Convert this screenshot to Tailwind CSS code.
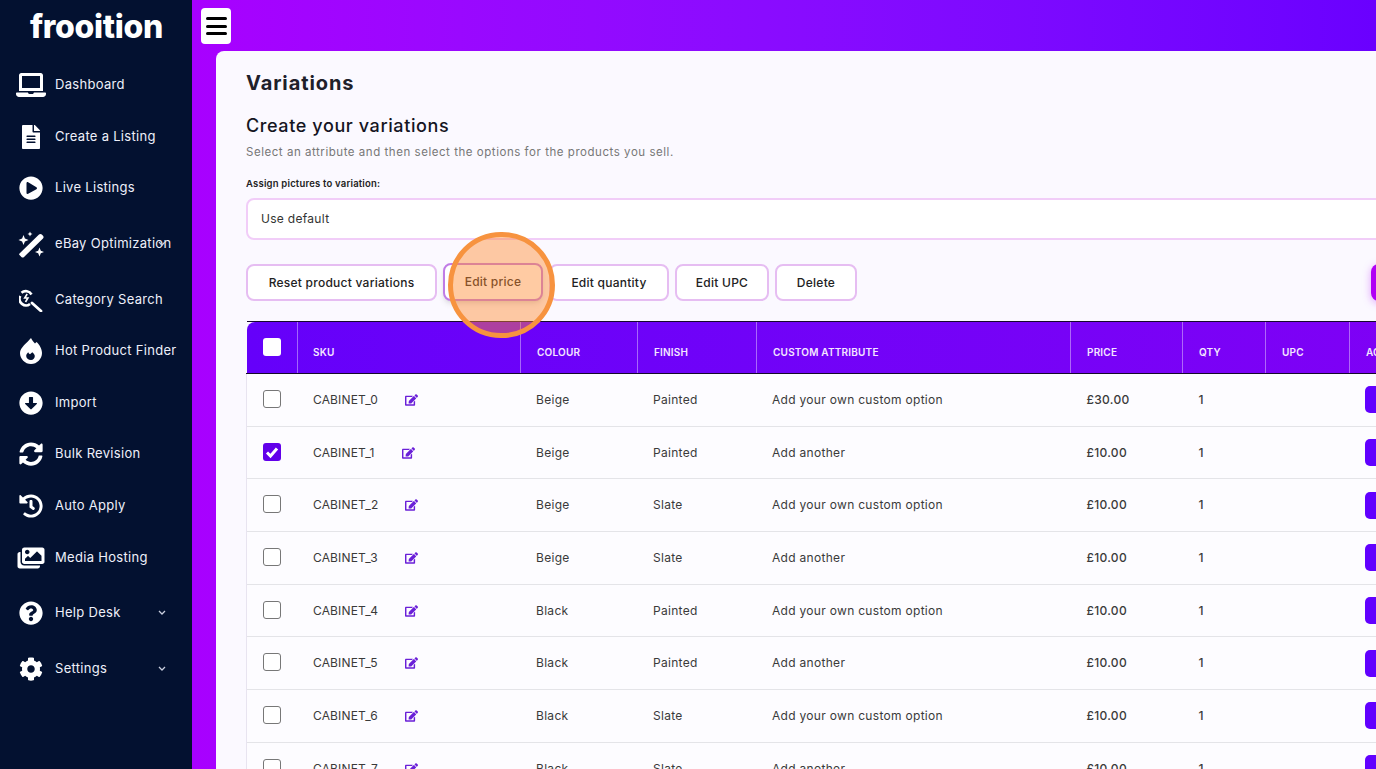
<!DOCTYPE html>
<html lang="en">
<head>
  <meta charset="UTF-8">
  <meta name="viewport" content="width=device-width, initial-scale=1.0">
  <title>Variations</title>
  <script src="https://cdn.jsdelivr.net/npm/@tailwindcss/browser@4"></script>
</head>
<body class="relative flex h-screen overflow-hidden bg-[#fbf9ff] font-['Inter',sans-serif] text-[#222]">

  <!-- Sidebar -->
  <aside class="w-[192px] shrink-0 bg-[#031130] text-[#eef0fa] text-[13px] tracking-[0.3px]">
    <div class="h-[60px] pl-[30px] pt-[7px] text-[32px] leading-[40px] font-extrabold tracking-[-0.3px] text-white">frooition</div>

    <a class="relative flex items-center h-[50px]">
      <span class="flex justify-center w-[30px] ml-[16px] mr-[9px]"><svg class="w-[30px] h-[24px] fill-white" viewBox="0 0 640 512"><path d="M624 416H381.54c-.74 19.81-14.71 32-32.74 32H288c-18.69 0-33.02-17.47-32.77-32H16c-8.8 0-16 7.2-16 16v16c0 35.2 28.8 64 64 64h512c35.2 0 64-28.8 64-64v-16c0-8.8-7.2-16-16-16zM576 48c0-26.4-21.6-48-48-48H112C85.6 0 64 21.6 64 48v336h512V48zm-64 272H128V64h384v256z"/></svg></span>
      Dashboard
    </a>
    <a class="relative flex items-center h-[50px] mt-[2px]">
      <span class="flex justify-center w-[30px] ml-[16px] mr-[9px]"><svg class="w-[18px] h-[24px] fill-white" viewBox="0 0 384 512"><path d="M224 136V0H24C10.7 0 0 10.7 0 24v464c0 13.3 10.7 24 24 24h336c13.3 0 24-10.7 24-24V160H248c-13.2 0-24-10.8-24-24zm64 236c0 6.6-5.4 12-12 12H108c-6.6 0-12-5.4-12-12v-8c0-6.6 5.4-12 12-12h168c6.6 0 12 5.4 12 12v8zm0-64c0 6.6-5.4 12-12 12H108c-6.6 0-12-5.4-12-12v-8c0-6.6 5.4-12 12-12h168c6.6 0 12 5.4 12 12v8zm0-72v8c0 6.6-5.4 12-12 12H108c-6.6 0-12-5.4-12-12v-8c0-6.6 5.4-12 12-12h168c6.6 0 12 5.4 12 12zm96-114.1v6.1H256V0h6.1c6.4 0 12.5 2.5 17 7l97.9 98c4.5 4.5 7 10.6 7 16.9z"/></svg></span>
      Create a Listing
    </a>
    <a class="relative flex items-center h-[50px] mt-[1px]">
      <span class="flex justify-center w-[30px] ml-[16px] mr-[9px]"><svg class="w-[24px] h-[24px] fill-white" viewBox="0 0 512 512"><path d="M256 8C119 8 8 119 8 256s111 248 248 248 248-111 248-248S393 8 256 8zm115.7 272l-176 101c-15.8 8.8-35.7-2.5-35.7-21V152c0-18.4 19.8-29.8 35.7-21l176 107c16.4 9.2 16.4 32.9 0 42z"/></svg></span>
      Live Listings
    </a>
    <a class="relative flex items-center h-[50px] mt-[6px]">
      <span class="flex justify-center w-[30px] ml-[16px] mr-[9px]"><svg class="w-[27px] h-[27px] fill-white" viewBox="0 0 27 27"><path d="M1.500 22.500 21 3.500c.8-.8 2-.8 2.800 0l1.200 1.200c.8.8.8 2 0 2.800L6 26c-.8.7-1.800.7-2.600 0l-1.900-1.900c-.5-.5-.5-1.100 0-1.600z"/><path d="M5.500 4l1.400 3.600 3.600 1.400-3.600 1.400-1.400 3.600-1.400-3.600L.5 9l3.600-1.400zM12 .5l.8 1.700 1.700.8-1.700.8-.8 1.700-.8-1.700-1.700-.8 1.700-.8zM21.500 16.500l1.300 3.200 3.200 1.300-3.200 1.300-1.300 3.200-1.300-3.200-3.200-1.300 3.200-1.300z"/></svg></span>
      eBay Optimization
      <svg class="absolute right-[26px] top-[22px] w-[8px] h-[5px] fill-none stroke-[#c9cede] stroke-[1.300]" viewBox="0 0 8 5"><path d="m1 1 3 3 3-3"/></svg>
    </a>
    <a class="relative flex items-center h-[50px] mt-[6px]">
      <span class="flex justify-center w-[30px] ml-[16px] mr-[9px]"><svg class="w-[24px] h-[24px] fill-none stroke-white" viewBox="0 0 24 24"><path stroke-width="2.600" d="M12.500 6.500A6.500 6.500 0 0 0 2.500 4.800M1.200 8A6.500 6.500 0 0 0 11 16"/><path stroke-width="1.600" d="m8.200 6-2.500 4h3.200L6.500 14"/><path stroke-width="2.800" stroke-linecap="round" d="m13 15 9 8"/></svg></span>
      Category Search
    </a>
    <a class="relative flex items-center h-[50px] mt-[1px]">
      <span class="flex justify-center w-[30px] ml-[16px] mr-[9px]"><svg class="w-[22px] h-[26px]" viewBox="0 0 22 26"><path fill="#fff" d="M11 0c1 2.300 2.500 4 4 5.500l1.500-1.500C19.500 6.500 22 11 22 15c0 6-5 11-11 11S0 21 0 15C0 9.500 7 5 11 0z"/><path fill="#031130" d="M11 22c-2.800 0-4.800-1.800-4.800-4 0-1.300.8-2.600 2-3.800.4 1 1 1.600 1.800 2l2.300-2c1.600 1.300 2.500 2.600 2.500 3.800 0 2.200-1.500 4-3.800 4z"/></svg></span>
      Hot Product Finder
    </a>
    <a class="relative flex items-center h-[50px] mt-[2px]">
      <span class="flex justify-center w-[30px] ml-[16px] mr-[9px]"><svg class="w-[24px] h-[24px] fill-white" viewBox="0 0 512 512"><path d="M504 256c0 137-111 248-248 248S8 393 8 256 119 8 256 8s248 111 248 248zM212 140v116h-70.900c-10.700 0-16.100 13-8.500 20.500l114.900 114.300c4.700 4.700 12.200 4.700 16.900 0l114.900-114.300c7.600-7.600 2.200-20.500-8.500-20.500H300V140c0-6.600-5.400-12-12-12h-64c-6.600 0-12 5.400-12 12z"/></svg></span>
      Import
    </a>
    <a class="relative flex items-center h-[50px] mt-[1px]">
      <span class="flex justify-center w-[30px] ml-[16px] mr-[9px]"><svg class="w-[24px] h-[24px] fill-white" viewBox="0 0 512 512"><path d="M370.720 133.280C339.458 104.008 298.888 87.962 255.848 88c-77.458.068-144.328 53.178-162.791 126.850-1.344 5.363-6.122 9.150-11.651 9.150H24.103c-7.498 0-13.194-6.807-11.807-14.176C33.933 94.924 134.813 8 256 8c66.448 0 126.791 26.136 171.315 68.685L463.030 40.970C478.149 25.851 504 36.559 504 57.941V192c0 13.255-10.745 24-24 24H345.941c-21.382 0-32.090-25.851-16.971-40.971l41.750-41.749zM32 296h134.059c21.382 0 32.090 25.851 16.971 40.971l-41.750 41.750c31.262 29.273 71.835 45.319 114.876 45.280 77.418-.07 144.315-53.144 162.787-126.849 1.344-5.363 6.122-9.150 11.651-9.150h57.304c7.498 0 13.194 6.807 11.807 14.176C478.067 417.076 377.187 504 256 504c-66.448 0-126.791-26.136-171.315-68.685L48.970 471.030C33.851 486.149 8 475.441 8 454.059V320c0-13.255 10.745-24 24-24z"/></svg></span>
      Bulk Revision
    </a>
    <a class="relative flex items-center h-[50px] mt-[2px]">
      <span class="flex justify-center w-[30px] ml-[16px] mr-[9px]"><svg class="w-[24px] h-[24px] fill-white" viewBox="0 0 512 512"><path d="M504 255.531c.253 136.640-111.180 248.372-247.820 248.468-59.015.042-113.223-20.530-155.822-54.911-11.077-8.940-11.905-25.541-1.839-35.607l11.267-11.267c8.609-8.609 22.353-9.551 31.891-1.984C173.062 425.135 212.781 440 256 440c101.705 0 184-82.311 184-184 0-101.705-82.311-184-184-184-48.814 0-93.149 18.969-126.068 49.932l50.754 50.754c10.080 10.080 2.941 27.314-11.313 27.314H24c-8.837 0-16-7.163-16-16V38.627c0-14.254 17.234-21.393 27.314-11.314l49.372 49.372C129.209 34.136 189.552 8 256 8c136.810 0 247.747 110.780 248 247.531zm-180.912 78.784l9.823-12.630c8.138-10.463 6.253-25.542-4.210-33.679L288 256.349V152c0-13.255-10.745-24-24-24h-16c-13.255 0-24 10.745-24 24v135.651l65.409 50.874c10.463 8.137 25.541 6.253 33.679-4.210z"/></svg></span>
      Auto Apply
    </a>
    <a class="relative flex items-center h-[50px] mt-[2px]">
      <span class="flex justify-center w-[30px] ml-[16px] mr-[9px]"><svg class="w-[28px] h-[24px] fill-white" viewBox="0 0 576 512"><path d="M480 416v16c0 26.510-21.490 48-48 48H48c-26.510 0-48-21.490-48-48V176c0-26.510 21.490-48 48-48h16v208c0 44.112 35.888 80 80 80h336zm96-80V80c0-26.510-21.490-48-48-48H144c-26.510 0-48 21.490-48 48v256c0 26.510 21.490 48 48 48h384c26.510 0 48-21.490 48-48zM256 128c0 26.510-21.490 48-48 48s-48-21.490-48-48 21.490-48 48-48 48 21.490 48 48zm-96 144l55.515-55.515c4.686-4.686 12.284-4.686 16.971 0L272 256l135.515-135.515c4.686-4.686 12.284-4.686 16.971 0L512 208v112H160v-48z"/></svg></span>
      Media Hosting
    </a>
    <a class="relative flex items-center h-[50px] mt-[5px]">
      <span class="flex justify-center w-[30px] ml-[16px] mr-[9px]"><svg class="w-[24px] h-[24px] fill-white" viewBox="0 0 512 512"><path d="M504 256c0 136.997-111.043 248-248 248S8 392.997 8 256C8 119.083 119.043 8 256 8s248 111.083 248 248zM262.655 90c-54.497 0-89.255 22.957-116.549 63.758-3.536 5.286-2.353 12.415 2.715 16.258l34.699 26.310c5.205 3.947 12.621 3.008 16.665-2.122 17.864-22.658 30.113-35.797 57.303-35.797 20.429 0 45.698 13.148 45.698 32.958 0 14.976-12.363 22.667-32.534 33.976C247.128 238.528 216 254.941 216 296v4c0 6.627 5.373 12 12 12h56c6.627 0 12-5.373 12-12v-1.333c0-28.462 83.186-29.647 83.186-106.667 0-58.002-60.165-102-116.531-102zM256 338c-25.365 0-46 20.635-46 46 0 25.364 20.635 46 46 46s46-20.636 46-46c0-25.365-20.635-46-46-46z"/></svg></span>
      Help Desk
      <svg class="absolute right-[26px] top-[22px] w-[8px] h-[5px] fill-none stroke-[#c9cede] stroke-[1.300]" viewBox="0 0 8 5"><path d="m1 1 3 3 3-3"/></svg>
    </a>
    <a class="relative flex items-center h-[50px] mt-[6px]">
      <span class="flex justify-center w-[30px] ml-[16px] mr-[9px]"><svg class="w-[24px] h-[24px] fill-white" viewBox="0 0 512 512"><path d="M487.400 315.700l-42.600-24.600c4.300-23.200 4.300-47 0-70.200l42.600-24.600c4.900-2.800 7.100-8.600 5.500-14-11.100-35.600-30-67.800-54.700-94.600-3.800-4.100-10-5.100-14.800-2.300L380.800 110c-17.900-15.400-38.500-27.300-60.800-35.100V25.800c0-5.600-3.900-10.500-9.400-11.700-36.700-8.200-74.300-7.800-109.200 0-5.500 1.200-9.400 6.100-9.400 11.700V75c-22.200 7.900-42.800 19.800-60.800 35.100L88.700 85.500c-4.900-2.800-11-1.900-14.800 2.300-24.700 26.700-43.600 58.900-54.700 94.600-1.700 5.400.6 11.200 5.500 14L67.300 221c-4.300 23.200-4.300 47 0 70.200l-42.600 24.600c-4.900 2.800-7.100 8.600-5.500 14 11.100 35.600 30 67.800 54.700 94.600 3.800 4.100 10 5.100 14.800 2.300l42.600-24.600c17.900 15.400 38.500 27.300 60.800 35.100v49.200c0 5.600 3.900 10.500 9.400 11.700 36.700 8.200 74.300 7.800 109.200 0 5.500-1.200 9.400-6.100 9.400-11.700v-49.200c22.200-7.900 42.800-19.800 60.800-35.100l42.600 24.600c4.900 2.800 11 1.900 14.800-2.300 24.700-26.700 43.600-58.900 54.700-94.600 1.500-5.500-.7-11.300-5.600-14.100zM256 336c-44.100 0-80-35.900-80-80s35.900-80 80-80 80 35.900 80 80-35.900 80-80 80z"/></svg></span>
      Settings
      <svg class="absolute right-[26px] top-[22px] w-[8px] h-[5px] fill-none stroke-[#c9cede] stroke-[1.300]" viewBox="0 0 8 5"><path d="m1 1 3 3 3-3"/></svg>
    </a>
  </aside>

  <!-- Main -->
  <main class="flex-1 min-w-0 bg-gradient-to-r from-[#a800ff] to-[#6a00ff]">
    <div class="h-[51px] pl-[9px] pt-[8px]">
      <button class="flex flex-col items-center justify-center gap-[4.500px] w-[30px] h-[36px] bg-white rounded-[4px]">
        <span class="block w-[21px] h-[3px] bg-black rounded-full"></span>
        <span class="block w-[21px] h-[3px] bg-black rounded-full"></span>
        <span class="block w-[21px] h-[3px] bg-black rounded-full"></span>
      </button>
    </div>

    <div class="ml-[24px] w-[1290px] h-[718px] overflow-hidden bg-[#fbf9ff] rounded-tl-lg pl-[30px] pr-[30px]">
      <h1 class="pt-[19px] text-[20px] leading-[26px] font-bold tracking-[0.9px] text-[#20202a]">Variations</h1>
      <h2 class="mt-[17px] text-[18px] leading-[26px] font-medium tracking-[0.6px] text-[#15151f]">Create your variations</h2>
      <p class="mt-[5px] text-[11.500px] leading-[16px] tracking-[0.54px] text-[#777]">Select an attribute and then select the options for the products you sell.</p>
      <label class="block mt-[17px] text-[9.500px] leading-[14px] font-semibold tracking-[0.2px] text-[#222]">Assign pictures to variation:</label>
      <div class="mt-[7px] flex items-center h-[42px] px-[13px] bg-white border-2 border-[#f1cdf8] rounded-lg text-[12px] tracking-[0.3px] text-[#333]">Use default</div>

      <div class="mt-[24px] flex justify-between">
        <div class="flex gap-[6px] text-[12px] font-medium tracking-[0.25px] text-[#222]">
          <button class="h-[37px] w-[191px] bg-white border-2 border-[#e6bdf2] rounded-lg">Reset product variations</button>
          <button class="h-[38px] w-[100px] -mt-[1px] bg-white border-2 border-[#c07ce6] rounded-lg shadow-md">Edit price</button>
          <button class="h-[37px] w-[120px] bg-white border-2 border-[#e6bdf2] rounded-lg">Edit quantity</button>
          <button class="h-[37px] w-[94px] bg-white border-2 border-[#e6bdf2] rounded-lg">Edit UPC</button>
          <button class="h-[37px] w-[82px] bg-white border-2 border-[#e6bdf2] rounded-lg">Delete</button>
        </div>
        <button class="h-[37px] w-[105px] bg-[#b000f5] rounded-lg shadow-[0_2px_8px_rgba(176,0,245,0.35)]"></button>
      </div>

      <table class="mt-[20px] w-[1230px] table-fixed text-[12px] tracking-[0.3px] text-[#3a3a3a]">
        <colgroup>
          <col class="w-[51px]"><col class="w-[223px]"><col class="w-[117px]"><col class="w-[119px]"><col class="w-[314px]"><col class="w-[112px]"><col class="w-[83px]"><col class="w-[84px]"><col>
        </colgroup>
        <thead>
          <tr class="h-[52px] bg-gradient-to-r from-[#6500fa] to-[#8000f5] text-left text-[10px] font-semibold tracking-[0.2px] text-[#f4e6ff]">
            <th class="pt-[16px] pl-[16px] align-top border-y border-[#16082c] rounded-tl-lg"><span class="block w-[18px] h-[18px] bg-white rounded-[3px]"></span></th>
            <th class="pl-[15px] pt-[10px] border-y border-l border-y-[#16082c] border-l-white/40 font-semibold">SKU</th>
            <th class="pl-[16px] pt-[10px] border-y border-l border-y-[#16082c] border-l-white/40 font-semibold">COLOUR</th>
            <th class="pl-[16px] pt-[10px] border-y border-l border-y-[#16082c] border-l-white/40 font-semibold">FINISH</th>
            <th class="pl-[16px] pt-[10px] border-y border-l border-y-[#16082c] border-l-white/40 font-semibold">CUSTOM ATTRIBUTE</th>
            <th class="pl-[16px] pt-[10px] border-y border-l border-y-[#16082c] border-l-white/40 font-semibold">PRICE</th>
            <th class="pl-[16px] pt-[10px] border-y border-l border-y-[#16082c] border-l-white/40 font-semibold">QTY</th>
            <th class="pl-[16px] pt-[10px] border-y border-l border-y-[#16082c] border-l-white/40 font-semibold">UPC</th>
            <th class="pl-[16px] pt-[10px] border-y border-l border-y-[#16082c] border-l-white/40 font-semibold">ACTIONS</th>
          </tr>
        </thead>
        <tbody id="rows" class="bg-[#fdfcff]"></tbody>
      </table>
    </div>
  </main>

  <!-- Tutorial highlight over the Edit price button -->
  <div class="absolute left-[448px] top-[232px] w-[107px] h-[106px] rounded-full border-[5px] border-[#f7933f] bg-[#ff8c32]/45"></div>

  <script>
    const editIcon = '<svg class="w-[13px] h-[12px] fill-[#6a1fd8]" viewBox="0 0 576 512"><path d="M402.600 83.200l90.200 90.200c3.800 3.800 3.800 10 0 13.800L274.400 405.600l-92.800 10.300c-12.400 1.400-22.900-9.100-21.500-21.500l10.300-92.800L388.800 83.200c3.800-3.800 10-3.800 13.800 0zm162-22.900l-48.800-48.800c-15.200-15.200-39.900-15.200-55.200 0l-35.400 35.400c-3.800 3.800-3.800 10 0 13.800l90.200 90.200c3.800 3.800 10 3.800 13.800 0l35.400-35.400c15.200-15.300 15.200-40 0-55.200zM384 346.200V448H64V128h229.800c3.200 0 6.200-1.300 8.500-3.500l40-40c7.600-7.600 2.200-20.500-8.500-20.500H48C21.500 64 0 85.500 0 112v352c0 26.500 21.500 48 48 48h352c26.500 0 48-21.500 48-48V306.200c0-10.700-12.900-16-20.500-8.500l-40 40c-2.200 2.300-3.500 5.300-3.500 8.500z"/></svg>';
    const unchecked = '<span class="block w-[18px] h-[18px] -mt-[2px] bg-white border border-[#777] rounded-[3px]"></span>';
    const checked = '<span class="flex items-center justify-center w-[18px] h-[18px] -mt-[2px] bg-[#6200ea] rounded-[3px]"><svg class="w-[14px] h-[14px] fill-none stroke-white stroke-[3]" viewBox="0 0 14 14"><path d="m2 7.500 3.500 3.500L12 3.500"/></svg></span>';

    const variations = [
      ['Beige', 'Painted', 'Add your own custom option', '£30.00'],
      ['Beige', 'Painted', 'Add another', '£10.00'],
      ['Beige', 'Slate', 'Add your own custom option', '£10.00'],
      ['Beige', 'Slate', 'Add another', '£10.00'],
      ['Black', 'Painted', 'Add your own custom option', '£10.00'],
      ['Black', 'Painted', 'Add another', '£10.00'],
      ['Black', 'Slate', 'Add your own custom option', '£10.00'],
      ['Black', 'Slate', 'Add another', '£10.00'],
    ];

    document.getElementById('rows').innerHTML = variations.map((v, i) => `
      <tr class="h-[52.700px] border-b border-[#e4e4e8]">
        <td class="pl-[16px] border-l border-[#e8e4f0]">${i === 1 ? checked : unchecked}</td>
        <td class="pl-[15.500px]"><span class="flex items-center gap-[27px] tracking-[0.15px]">CABINET_${i} ${editIcon}</span></td>
        <td class="pl-[15.500px]">${v[0]}</td>
        <td class="pl-[15.500px]">${v[1]}</td>
        <td class="pl-[15.500px]">${v[2]}</td>
        <td class="pl-[16px] font-medium">${v[3]}</td>
        <td class="pl-[16px] font-medium">1</td>
        <td></td>
        <td class="pl-[15px]"><span class="block w-[60px] h-[27px] bg-[#6200ff] rounded-[5px]"></span></td>
      </tr>`).join('');
  </script>
</body>
</html>
